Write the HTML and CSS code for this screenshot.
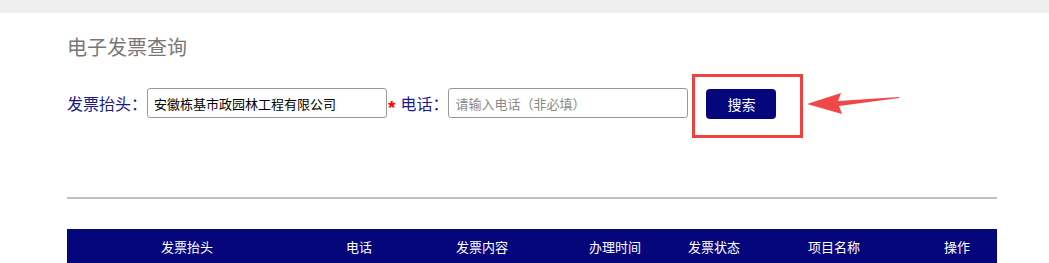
FILE: index.html
```html
<html>
    <head>
        <meta charset="utf-8">
        <link rel="stylesheet" href="styles.css">
    </head>
    <body>
        <div class="topbar"></div>
        <div class="page">
            <h2 class="title">电子发票查询</h2>
            <div class="search-row">
                <label class="label">发票抬头：</label>
                <input class="field" type="text" value="安徽栋基市政园林工程有限公司">
                <span class="required">*</span>
                <label class="label">电话：</label>
                <input class="field" type="text" placeholder="请输入电话（非必填）">
                <div class="btn-wrap">
                    <button class="btn-search">搜索</button>
                    <div class="mark-box"></div>
                    <svg class="mark-arrow" width="96" height="24" viewBox="0 0 96 24">
                        <polygon points="0,13 34,2 31,10 92,6 92,7 32,15 35,23" fill="#f04848"/>
                    </svg>
                </div>
            </div>
            <hr class="divider">
            <table class="result">
                <thead>
                    <tr>
                        <th class="c1">发票抬头</th>
                        <th class="c2">电话</th>
                        <th class="c3">发票内容</th>
                        <th class="c4">办理时间</th>
                        <th class="c5">发票状态</th>
                        <th class="c6">项目名称</th>
                        <th class="c7">操作</th>
                    </tr>
                </thead>
            </table>
        </div>
    </body>
</html>
```

FILE: styles.css
```css
body {
    margin: 0;
    font-family: "Noto Sans CJK SC", "Liberation Sans", sans-serif;
    background: #fff;
}

.topbar {
    height: 13px;
    background: #efefef;
}

.page {
    padding-left: 67px;
    width: 930px;
}

.title {
    margin: 0;
    padding-top: 19px;
    font-size: 20px;
    font-weight: normal;
    line-height: 30px;
    color: #777;
}

.search-row {
    display: flex;
    align-items: center;
    margin-top: 26px;
    height: 30px;
}

.label {
    font-size: 16px;
    color: #1a1a8a;
}

.field {
    box-sizing: border-box;
    width: 240px;
    height: 30px;
    padding: 0 6px;
    border: 1px solid #999;
    border-radius: 3px;
    font-family: "Noto Sans CJK SC", sans-serif;
    font-size: 13px;
    color: #000;
}

.field::placeholder {
    color: #888;
}

.required {
    color: #f00;
    font-size: 19px;
    font-weight: bold;
    margin: 10px 5px 0 1px;
    font-family: "Liberation Sans", sans-serif;
}

.btn-wrap {
    position: relative;
    margin-left: 18px;
}

.btn-search {
    display: block;
    width: 70px;
    height: 30px;
    border: none;
    border-radius: 4px;
    background: #06067c;
    color: #fff;
    font-family: "Noto Sans CJK SC", sans-serif;
    font-size: 14px;
    margin-top: 1px;
}

.mark-box {
    position: absolute;
    left: -14px;
    top: -14px;
    width: 105px;
    height: 58px;
    border: 3px solid #f04040;
}

.mark-arrow {
    position: absolute;
    left: 101px;
    top: 3px;
}

.divider {
    margin: 79px 0 0;
    border: none;
    height: 2px;
    background: #c0c0c0;
}

.result {
    margin-top: 30px;
    width: 930px;
    border-collapse: collapse;
    table-layout: fixed;
}

.result th {
    height: 34px;
    padding: 0;
    background: #06067c;
    color: #fff;
    font-size: 13px;
    font-weight: normal;
    text-align: center;
}

.c1 { width: 240px; }
.c2 { width: 104px; }
.c3 { width: 142px; }
.c4 { width: 124px; }
.c5 { width: 74px; }
.c6 { width: 166px; }
.c7 { width: 80px; }
```
